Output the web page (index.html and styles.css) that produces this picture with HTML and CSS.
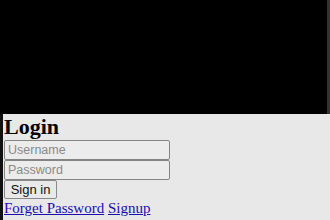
FILE: index.html
```html
<!DOCTYPE html>
<html lang="en">
<head>
  <meta charset="UTF-8">
  <title>Login</title>
  <meta name="viewport" content="width=device-width, initial-scale=1.0">
  <link rel="stylesheet" href="styles.css">
</head>
<body>
  <div class="screen"></div>

  <div class="login-panel">
    <h2 class="login-title">Login</h2>
    <form class="login-form">
      <input class="login-input" type="text" placeholder="Username">
      <input class="login-input" type="password" placeholder="Password">
      <button class="login-btn" type="button">Sign in</button>
    </form>
    <div class="login-links">
      <a href="#">Forget Password</a> <a href="#">Signup</a>
    </div>
  </div>
</body>
</html>
```

FILE: styles.css
```css
body {
  margin: 0;
  height: 100vh;
  background: #e8e8e8;
  font-family: 'Liberation Serif', 'Times New Roman', serif;
  overflow: hidden;
}

.screen {
  height: 114px;
  background: #000;
  border-right: 3px solid #333;
}

.login-panel {
  border-left: 3px solid #111;
  padding-left: 1px;
  height: 106px;
}

.login-title {
  margin: 0;
  font-size: 22px;
  font-weight: bold;
  line-height: 26px;
  color: #000;
}

.login-form {
  display: flex;
  flex-direction: column;
  align-items: flex-start;
}

.login-input {
  box-sizing: border-box;
  width: 166px;
  height: 20px;
  margin: 0;
  padding: 0 3px;
  border: 1px solid #858585;
  border-radius: 2px;
  background: #ececec;
  font-family: 'Liberation Sans', Arial, sans-serif;
  font-size: 12.5px;
  color: #000;
}

.login-input::placeholder {
  color: #8a8a8a;
}

.login-btn {
  box-sizing: border-box;
  width: 53px;
  height: 19px;
  margin: 0;
  padding: 0;
  border: 1px solid #8a8a8a;
  border-radius: 2px;
  background: #e9e9e9;
  font-family: 'Liberation Sans', Arial, sans-serif;
  font-size: 13px;
  color: #111;
}

.login-links {
  font-size: 15px;
  line-height: 19px;
}

.login-links a {
  color: #1a0dab;
  text-decoration: underline;
}
```
